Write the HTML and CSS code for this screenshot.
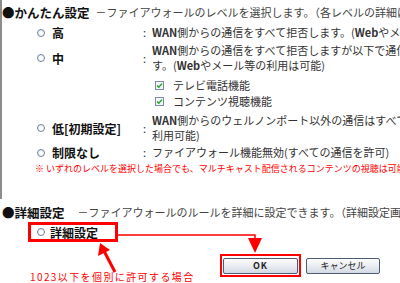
FILE: index.html
```html
<!DOCTYPE html>
<html lang="ja">
<head>
    <meta charset="UTF-8">
    <title>ファイアウォール設定</title>
    <link rel="stylesheet" href="styles.css">
</head>
<body>
    <div class="easy">
        <div class="section-head">
            <span class="sec-title">●かんたん設定</span>
            <span class="sec-desc">－ファイアウォールのレベルを選択します。（各レベルの詳細は下記をご覧ください）</span>
        </div>

        <div class="level lv-high">
            <span class="radio"></span>
            <span class="level-name">高</span>
            <span class="colon">:</span>
            <div class="level-desc"><b>WAN</b>側からの通信をすべて拒否します。(<b>Web</b>やメール等の利用も不可)</div>
        </div>

        <div class="level lv-mid">
            <span class="radio"></span>
            <span class="level-name">中</span>
            <span class="colon">:</span>
            <div class="level-desc"><b>WAN</b>側からの通信をすべて拒否しますが以下で通信を許可しま<br>す。(<b>Web</b>やメール等の利用は可能)</div>
        </div>

        <div class="options">
            <div class="option">
                <svg class="check" width="9" height="9" viewBox="0 0 9 9"><rect x="0.5" y="0.5" width="8" height="8" fill="#f4f6fa" stroke="#7b8cab"/><path d="M2 4.5 L3.8 6.3 L7 2.6" fill="none" stroke="#21a121" stroke-width="1.4"/></svg>
                <span>テレビ電話機能</span>
            </div>
            <div class="option">
                <svg class="check" width="9" height="9" viewBox="0 0 9 9"><rect x="0.5" y="0.5" width="8" height="8" fill="#f4f6fa" stroke="#7b8cab"/><path d="M2 4.5 L3.8 6.3 L7 2.6" fill="none" stroke="#21a121" stroke-width="1.4"/></svg>
                <span>コンテンツ視聴機能</span>
            </div>
        </div>

        <div class="level lv-low">
            <span class="radio"></span>
            <span class="level-name">低[初期設定]</span>
            <span class="colon">:</span>
            <div class="level-desc"><b>WAN</b>側からのウェルノンポート以外の通信はすべて許可します。<br>利用可能)</div>
        </div>

        <div class="level lv-none">
            <span class="radio"></span>
            <span class="level-name">制限なし</span>
            <span class="colon">:</span>
            <div class="level-desc">ファイアウォール機能無効(すべての通信を許可)</div>
        </div>

        <p class="note">※ いずれのレベルを選択した場合でも、マルチキャスト配信されるコンテンツの視聴は可能です。</p>
    </div>

    <div class="detail">
        <div class="section-head">
            <span class="sec-title">●詳細設定</span>
            <span class="sec-desc sec-desc-wide">－ファイアウォールのルールを詳細に設定できます。（詳細設定画面へ）</span>
        </div>
        <div class="detail-choice">
            <span class="radio"></span>
            <span class="level-name">詳細設定</span>
        </div>
        <div class="detail-foot">
            <span class="hint">1023以下を個別に許可する場合</span>
            <div class="buttons">
                <div class="ok-mark"><button class="btn btn-ok">OK</button></div>
                <button class="btn btn-cancel">キャンセル</button>
            </div>
        </div>
    </div>

    <!-- red annotation marks drawn over the page -->
    <svg class="marks" width="400" height="283" viewBox="0 0 400 283">
        <polyline points="118,235 255,235 255,240" fill="none" stroke="#f00" stroke-width="1.5"/>
        <polygon points="248,238 262,238 255,253" fill="#f00"/>
        <line x1="115" y1="272" x2="104" y2="251" stroke="#f00" stroke-width="3"/>
        <polygon points="100,243 110,250 98,256" fill="#f00"/>
    </svg>
</body>
</html>
```

FILE: styles.css
```css
body {
    margin: 0;
    width: 400px;
    height: 283px;
    overflow: hidden;
    position: relative;
    background: #fff;
    color: #333;
    font-family: "Noto Sans CJK JP", "Noto Sans", sans-serif;
    font-size: 11px;
}

.easy {
    border-left: 2px solid #8c8c8c;
    padding: 3px 0 23px 0;
}

.section-head {
    display: flex;
    align-items: center;
    height: 18px;
    white-space: nowrap;
    overflow: hidden;
}

.sec-title {
    font-size: 12.5px;
    font-weight: bold;
    color: #111;
}

.sec-desc {
    margin-left: 6px;
    color: #444;
}

.sec-desc-wide {
    margin-left: 13px;
}

.level {
    display: grid;
    grid-template-columns: 15px 91px 9px 1fr;
    align-items: center;
    padding-left: 35px;
    line-height: 15px;
    white-space: nowrap;
}

.level-desc {
    min-width: 0;
    overflow: hidden;
}

.level-desc b {
    font-weight: bold;
}

.level-name {
    font-size: 12px;
    font-weight: bold;
    color: #111;
}

.colon {
    color: #333;
}

.lv-high { margin-top: 4px; }
.lv-mid { margin-top: 3px; }
.lv-low { margin-top: 4px; }
.lv-none { margin-top: 2px; }

.radio {
    display: block;
    width: 8px;
    height: 8px;
    box-sizing: border-box;
    border: 1px solid #6f82a0;
    border-radius: 50%;
    background: radial-gradient(circle at 60% 60%, #fff 30%, #dfe5ee);
}

.options {
    margin-top: 4px;
    padding-left: 153px;
}

.option {
    display: flex;
    align-items: center;
    gap: 9px;
    height: 16px;
    white-space: nowrap;
}

.check {
    display: block;
}

.note {
    margin: 2px 0 0;
    padding-left: 33px;
    color: #f00;
    font-size: 9px;
    line-height: 14px;
    white-space: nowrap;
}

.detail {
    padding-left: 2px;
    margin-top: 4px;
}

.detail-choice {
    display: flex;
    align-items: center;
    gap: 5px;
    margin: 1px 0 0 26px;
    width: 90px;
    height: 20px;
    box-sizing: border-box;
    border: 3px solid #f00;
    padding-left: 6px;
}

.detail-foot {
    display: flex;
    align-items: flex-start;
    margin-top: 12px;
}

.hint {
    margin: 17px 0 0 28px;
    color: #f00;
    font-size: 10px;
    line-height: 12px;
    letter-spacing: 1.4px;
    white-space: nowrap;
}

.buttons {
    display: flex;
    align-items: flex-start;
    gap: 5px;
    margin-left: auto;
    margin-right: 20px;
}

.ok-mark {
    border: 2px solid #f00;
    padding: 2px 1px 1px;
}

.btn {
    display: block;
    height: 16px;
    padding: 0;
    border: 1px solid #4d5d78;
    border-radius: 2px;
    background: linear-gradient(#fdfdfe, #e8ebf1 55%, #d3d9e3);
    color: #222;
    font-family: inherit;
    font-size: 9px;
    line-height: 14px;
}

.btn-ok {
    width: 75px;
    font-weight: bold;
    letter-spacing: 1px;
}

.btn-cancel {
    width: 74px;
    margin-top: 4px;
}

.marks {
    position: absolute;
    top: 0;
    left: 0;
    pointer-events: none;
}
```
